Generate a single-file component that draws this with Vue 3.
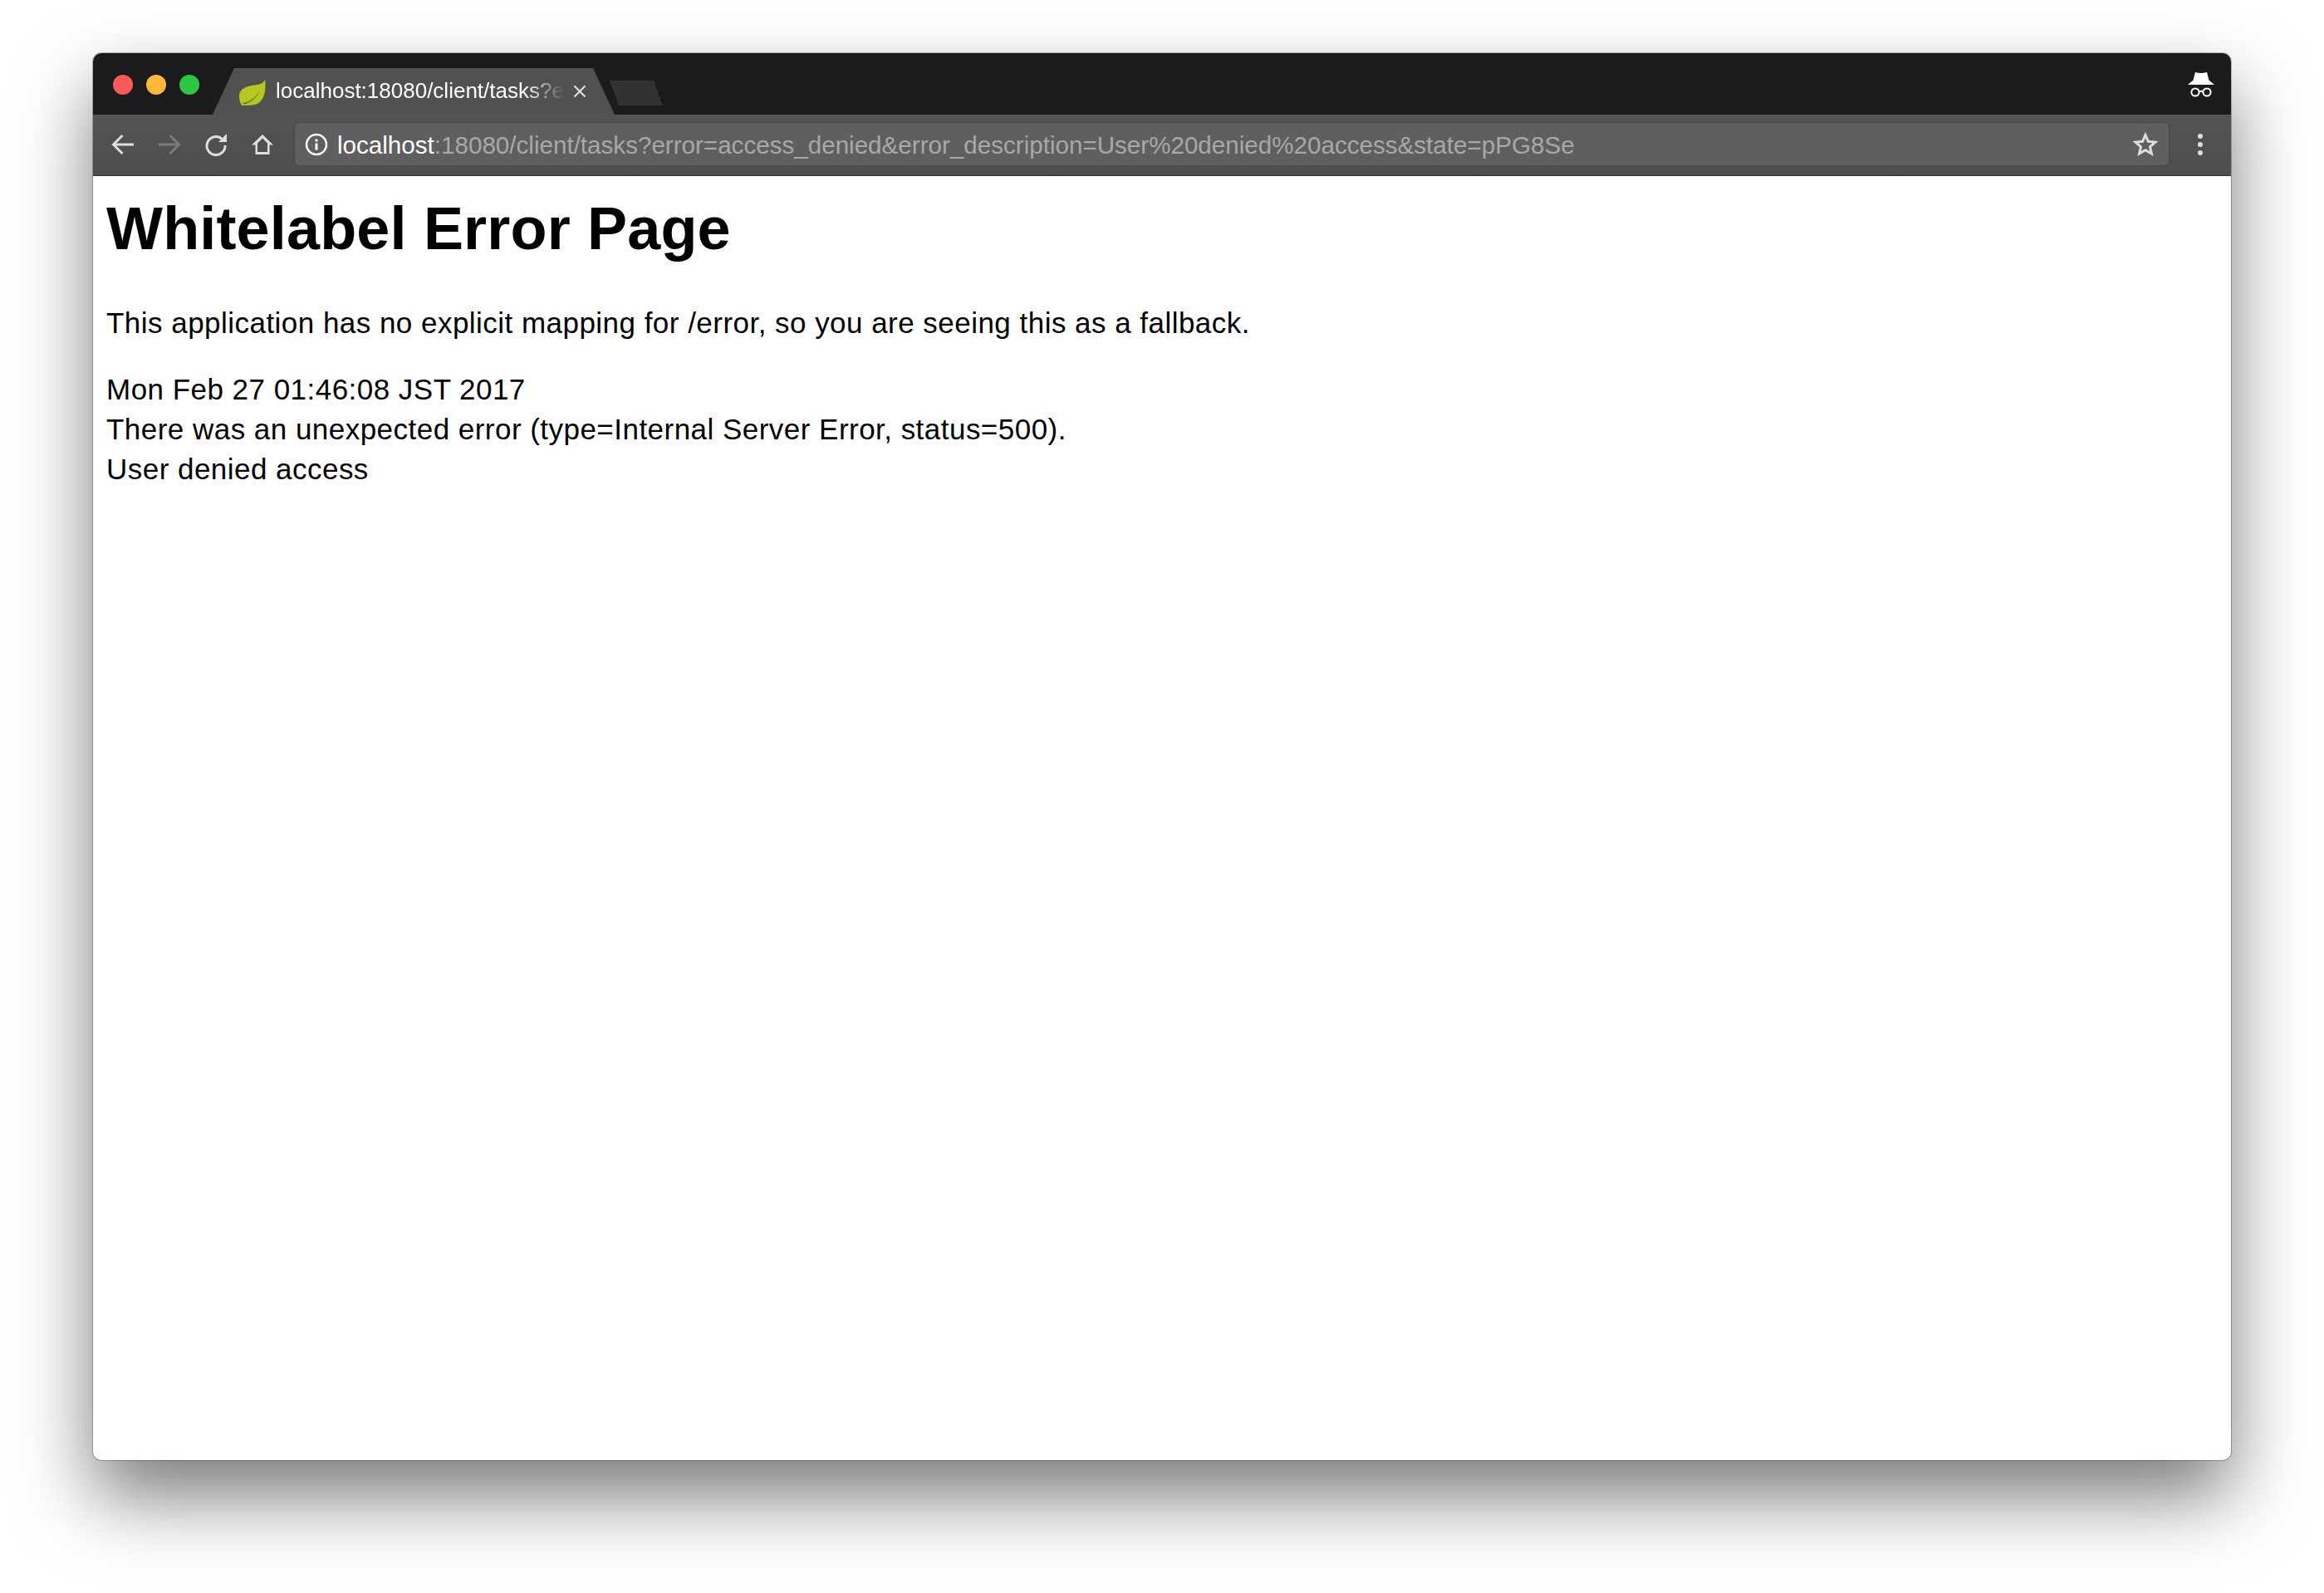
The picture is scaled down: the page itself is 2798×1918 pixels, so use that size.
<script setup>
const line = [
  { text: 'Mon Feb 27 01:46:08 JST 2017' },
  { text: 'There was an unexpected error (type=Internal Server Error, status=500).' },
  { text: 'User denied access' },
]
</script>

<template>
  <div class="page">
    <div class="window">
      <header class="strip">
        <div class="lights">
          <span class="light red"></span>
          <span class="light yellow"></span>
          <span class="light green"></span>
        </div>
        <div class="tab">
          <svg class="leaf" width="32" height="32" viewBox="0 0 32 32">
            <path d="M31 0C30 4 27 6 22 7C12 8 1 10 0 20C0 25 1 29 3 32C10 32 17 32 22 30C29 26 33 16 31 0Z" fill="#b7c71d"/>
            <path d="M3 29C11 28 19 24 26 13C22 22 14 29 6 31Z" fill="#4f9a2a"/>
          </svg>
          <span class="tab-title">localhost:18080/client/tasks?e</span>
          <svg class="tab-close" width="16" height="16" viewBox="0 0 16 16">
            <path d="M1.500 1.500L14.500 14.500M14.500 1.500L1.500 14.500" stroke="#e4e4e4" stroke-width="2" fill="none"/>
          </svg>
        </div>
        <div class="newtab"></div>
        <svg class="incognito" width="34" height="32" viewBox="0 0 34 32">
          <path d="M10 1Q17 3 24 1L26.500 10.500L33 16H1L7.500 10.500Z" fill="#fff"/>
          <circle cx="10" cy="25" r="4.600" fill="none" stroke="#fff" stroke-width="2"/>
          <circle cx="24" cy="25" r="4.600" fill="none" stroke="#fff" stroke-width="2"/>
          <path d="M14.500 24.500Q17 23 19.500 24.500" fill="none" stroke="#fff" stroke-width="2"/>
        </svg>
      </header>

      <nav class="toolbar">
        <span class="btn">
          <svg width="28" height="26" viewBox="0 0 28 26">
            <path d="M27 13H3M13.500 2L2.500 13L13.500 24" fill="none" stroke="#dedede" stroke-width="3"/>
          </svg>
        </span>
        <span class="btn">
          <svg width="28" height="26" viewBox="0 0 28 26">
            <path d="M1 13H25M14.500 2L25.500 13L14.500 24" fill="none" stroke="#7b7b7b" stroke-width="3"/>
          </svg>
        </span>
        <span class="btn">
          <svg width="28" height="28" viewBox="0 0 28 28">
            <path d="M21.500 7.500A11 11 0 1 0 25 15" fill="none" stroke="#dedede" stroke-width="3"/>
            <path d="M27 1V11H17Z" fill="#dedede"/>
          </svg>
        </span>
        <span class="btn">
          <svg width="28" height="26" viewBox="0 0 28 26">
            <path d="M14 1L1 13.500H5.500V25H22.500V13.500H27ZM14 5.500L20 11.500V22H8V11.500Z" fill="#dedede" fill-rule="evenodd"/>
          </svg>
        </span>

        <div class="omnibox">
          <svg class="info" width="28" height="28" viewBox="0 0 28 28">
            <circle cx="14" cy="14" r="12" fill="none" stroke="#fff" stroke-width="2.500"/>
            <rect x="12.500" y="12.500" width="3" height="8" fill="#fff"/>
            <rect x="12.500" y="7.500" width="3" height="3" fill="#fff"/>
          </svg>
          <span class="url"><span class="host">localhost</span>:18080/client/tasks?error=access_denied&amp;error_description=User%20denied%20access&amp;state=pPG8Se</span>
          <svg class="star" width="30" height="30" viewBox="0 0 30 30">
            <path d="M15 3.500L18.400 11.300L26.900 12.100L20.500 17.700L22.400 26L15 21.700L7.600 26L9.500 17.700L3.100 12.100L11.600 11.300Z" fill="none" stroke="#dedede" stroke-width="3"/>
          </svg>
        </div>

        <div class="menu">
          <span class="dot"></span>
          <span class="dot"></span>
          <span class="dot"></span>
        </div>
      </nav>

      <main class="content">
        <h1>Whitelabel Error Page</h1>
        <p class="lead">This application has no explicit mapping for /error, so you are seeing this as a fallback.</p>
        <div v-for="l in line" :key="l.text" class="row">{{ l.text }}</div>
      </main>
    </div>
  </div>
</template>

<style>
html, body { margin: 0; background: #fff; }
</style>

<style scoped>
.page {
  box-sizing: border-box;
  width: 2798px;
  height: 1918px;
  padding: 64px 112px 160px;
  overflow: hidden;
  font-family: "Liberation Sans", Arial, sans-serif;
  background: #fff;
}
.window {
  height: 100%;
  display: flex;
  flex-direction: column;
  border-radius: 10px;
  overflow: hidden;
  background: #fff;
  box-shadow: 0 0 0 1px rgba(0, 0, 0, .25), 0 44px 90px 0 rgba(0, 0, 0, .52);
}
.strip {
  height: 74px;
  flex: none;
  display: flex;
  align-items: flex-start;
  background: #1a1b1d;
}
.lights {
  display: flex;
  gap: 16px;
  margin: 26px 0 0 24px;
}
.light {
  width: 24px;
  height: 24px;
  border-radius: 50%;
}
.red { background: #fc5a57; }
.yellow { background: #fdb83a; }
.green { background: #2cc840; }
.tab {
  box-sizing: border-box;
  width: 484px;
  height: 56px;
  margin: 18px 0 0 16px;
  padding-left: 32px;
  display: flex;
  align-items: center;
  background: #515151;
  clip-path: polygon(26px 0, 458px 0, 484px 100%, 0 100%);
}
.leaf { flex: none; margin-top: 2px; }
.tab-title {
  width: 348px;
  margin: -3px 0 0 12px;
  flex: none;
  overflow: hidden;
  white-space: nowrap;
  color: #fff;
  font-size: 26px;
  line-height: 56px;
  -webkit-mask-image: linear-gradient(90deg, #000 86%, transparent 100%);
  mask-image: linear-gradient(90deg, #000 86%, transparent 100%);
}
.tab-close { flex: none; margin: 0 0 0 10px; }
.newtab {
  width: 64px;
  height: 30px;
  margin: 33px 0 0 -6px;
  background: #313234;
  clip-path: polygon(0 0, 53px 0, 64px 100%, 11px 100%);
}
.incognito { margin: 22px 19px 0 auto; flex: none; }
.toolbar {
  height: 74px;
  flex: none;
  box-sizing: border-box;
  display: flex;
  align-items: center;
  padding: 0 0 2px 8px;
  background: linear-gradient(#535353, #4e4e4e);
  border-bottom: 1px solid #2f2f2f;
}
.btn {
  width: 56px;
  height: 56px;
  flex: none;
  display: flex;
  align-items: center;
  justify-content: center;
}
.omnibox {
  box-sizing: border-box;
  width: 2258px;
  height: 53px;
  margin-left: 10px;
  padding: 0 13px 0 12px;
  flex: none;
  display: flex;
  align-items: center;
  background: #5f5f5f;
  border: 1px solid #474747;
  border-radius: 6px;
}
.info { flex: none; }
.url {
  margin: 3px 0 0 11px;
  flex: 1;
  white-space: nowrap;
  overflow: hidden;
  color: #a8a8a8;
  font-size: 29.6px;
  line-height: 46px;
}
.host { color: #fff; }
.star { flex: none; }
.menu {
  flex: none;
  width: 74px;
  display: flex;
  flex-direction: column;
  align-items: center;
  gap: 4px;
}
.dot {
  width: 6px;
  height: 6px;
  border-radius: 50%;
  background: #dedede;
}
.content {
  flex: 1;
  padding: 0 16px;
  color: #000;
  font-size: 35px;
  line-height: 48px;
  letter-spacing: .47px;
}
h1 {
  margin: 0;
  padding-top: 27px;
  font-size: 72px;
  line-height: 72px;
  font-weight: 700;
  letter-spacing: .17px;
}
.lead { margin: 54px 0 32px; }
</style>
